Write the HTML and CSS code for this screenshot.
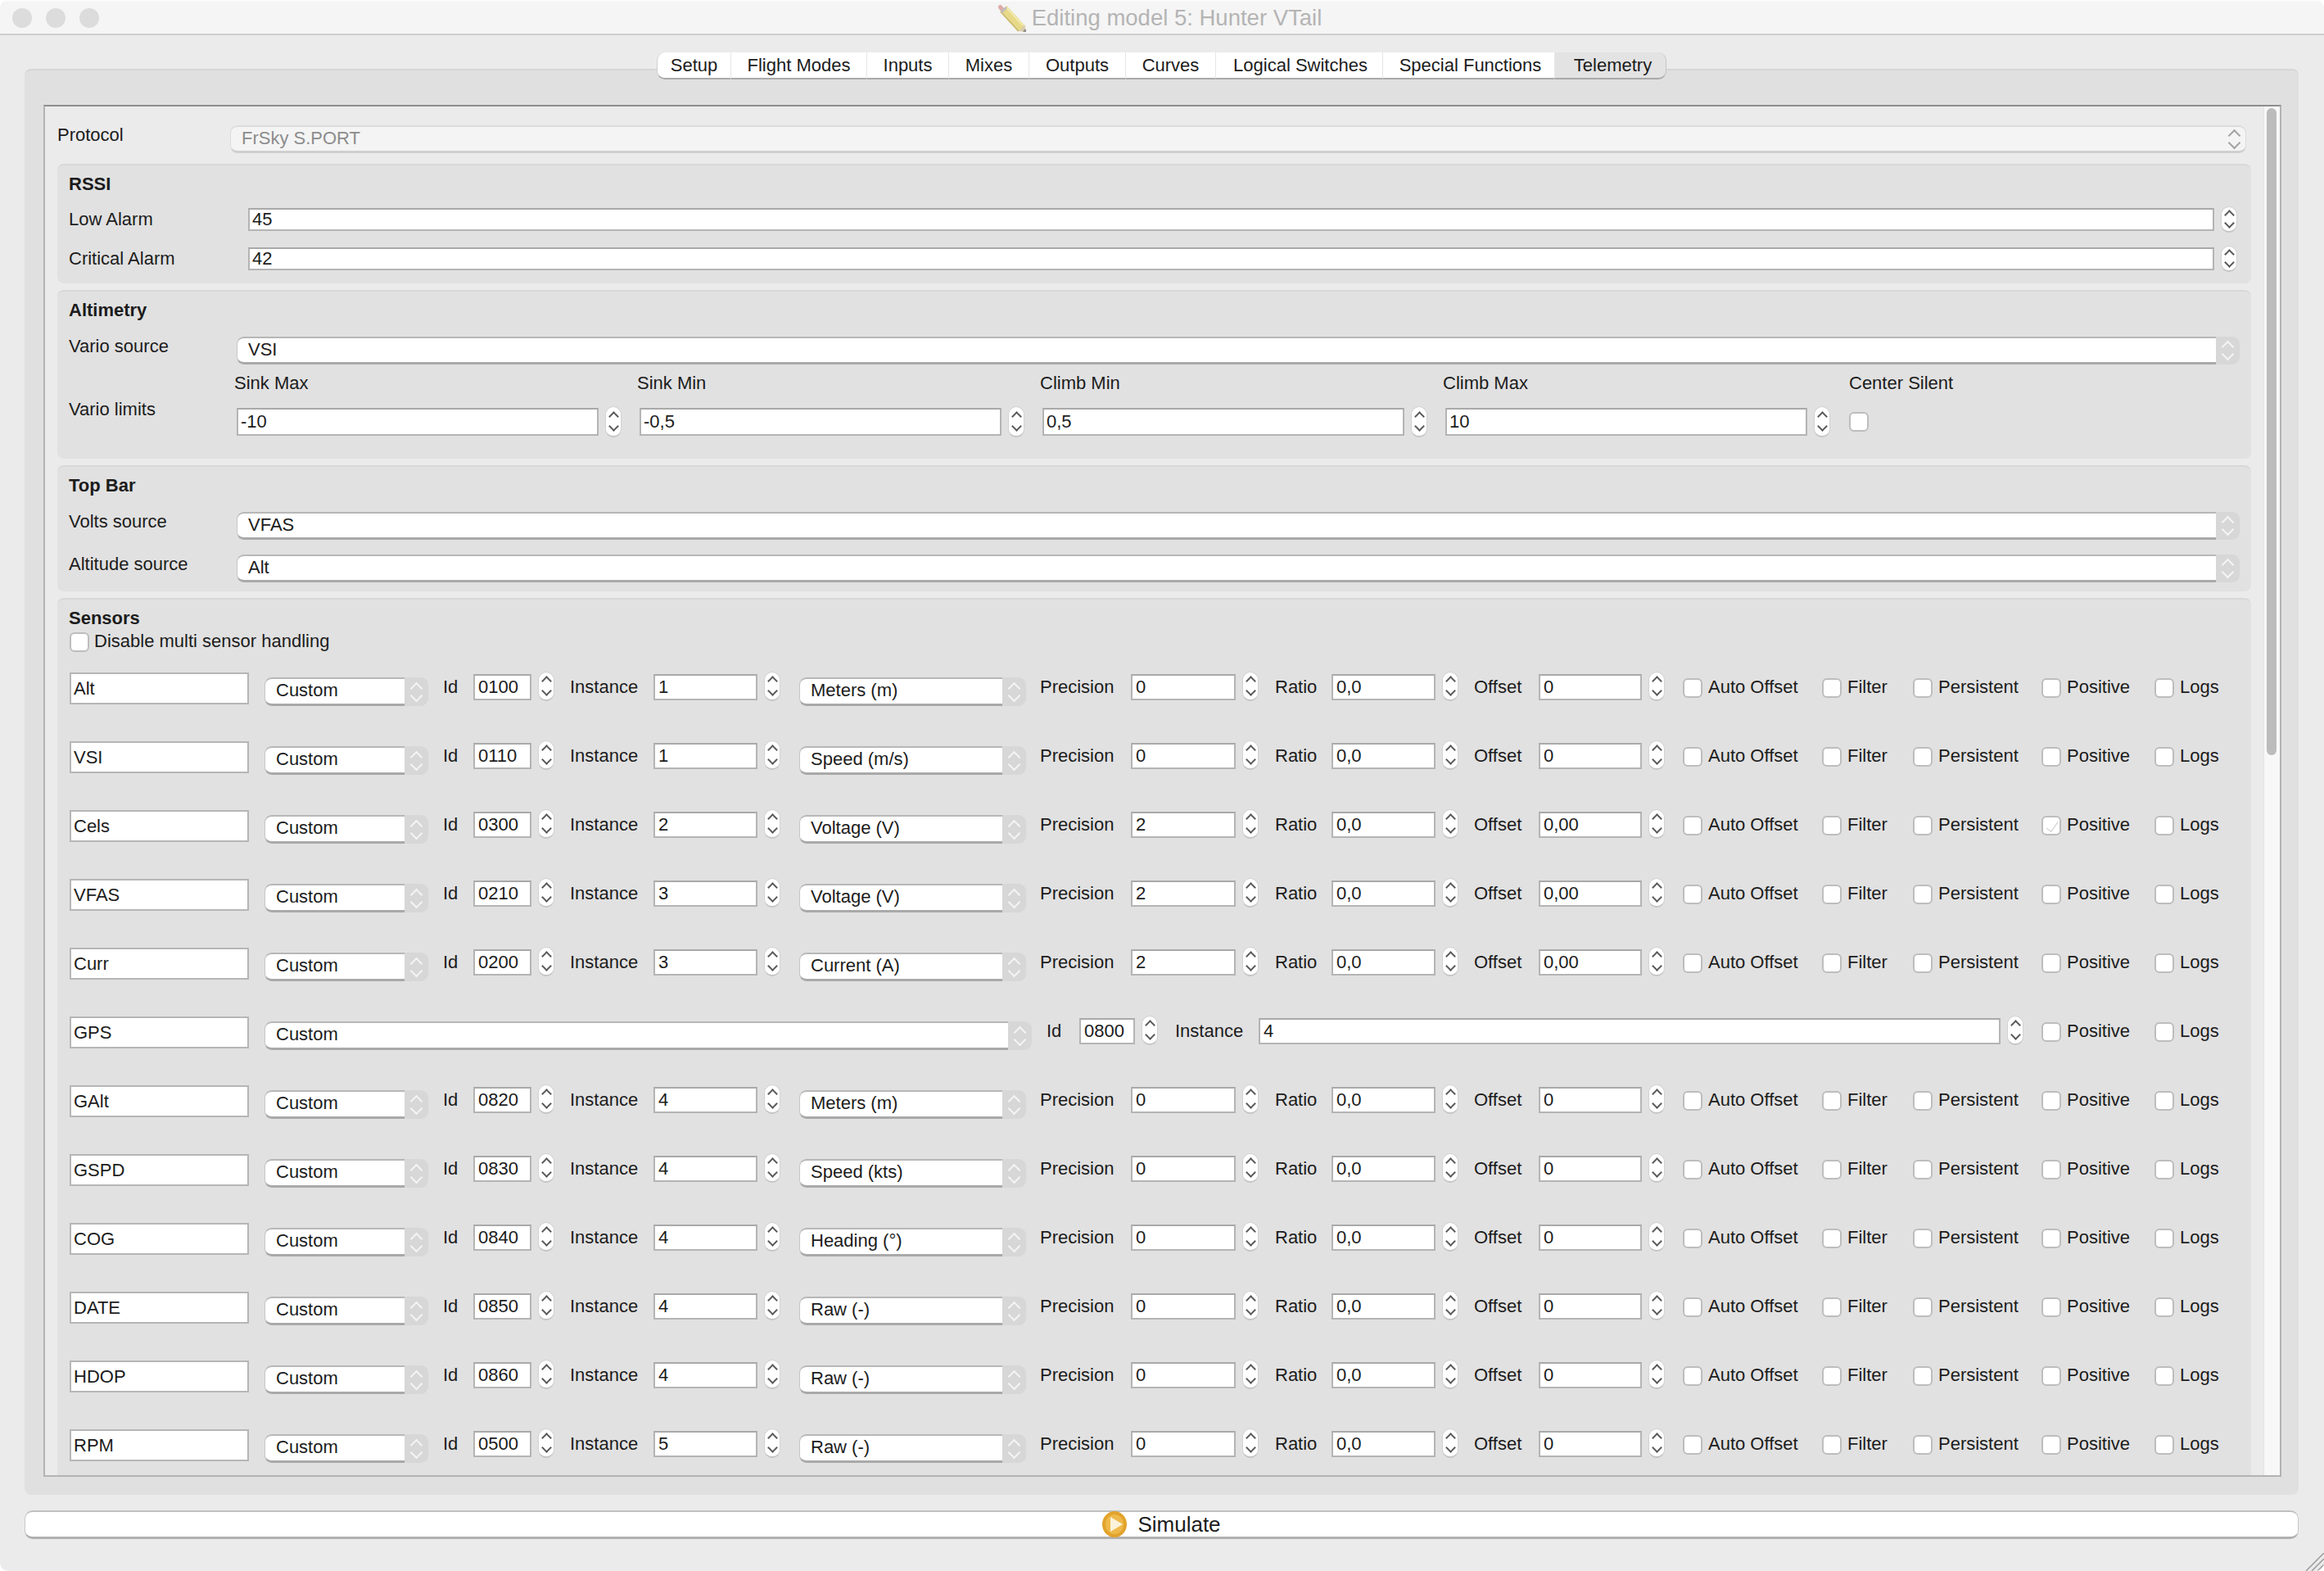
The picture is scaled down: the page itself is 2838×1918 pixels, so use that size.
FILE: index.html
```html
<!DOCTYPE html>
<html lang="en">
<head>
  <meta charset="UTF-8">
  <title>Editing model 5: Hunter VTail</title>
  <link rel="stylesheet" href="styles.css">
</head>
<body>
  <div class="window">
    <header class="titlebar">
      <div class="lights"><span></span><span></span><span></span></div>
      <div class="title">
        <svg class="pencil" width="34" height="34" viewBox="0 0 34 34">
          <path d="M7 5 L30 30" stroke="#e6d67c" stroke-width="9"/>
          <path d="M10 4 L32 28" stroke="#f1e7a6" stroke-width="2.5"/>
          <path d="M3 9 L25 33" stroke="#c9b55a" stroke-width="2"/>
          <path d="M8 6 L4 1.500 Q2 0 0.500 2 Q-1 4 1 6 L4 10 Z" fill="#dba6a0"/>
          <path d="M3 9 L9 3 L11 5 L5 11 Z" fill="#b9b9b9"/>
          <path d="M25 33 L34 34 L32 25 Z" fill="#d8c9a4"/>
          <path d="M30 33.500 L34 34 L33.500 30 Z" fill="#777"/>
        </svg>
        <span>Editing model 5: Hunter VTail</span>
      </div>
    </header>

    <main class="main">
      <nav class="tabs">
        <a class="tab">Setup</a>
        <a class="tab">Flight Modes</a>
        <a class="tab">Inputs</a>
        <a class="tab">Mixes</a>
        <a class="tab">Outputs</a>
        <a class="tab">Curves</a>
        <a class="tab">Logical Switches</a>
        <a class="tab">Special Functions</a>
        <a class="tab active">Telemetry</a>
      </nav>

      <div class="pane">
        <div class="frame">
          <div class="content">
            <div class="row protocol-row">
              <label class="row-label protocol-label">Protocol</label>
              <div class="combo disabled protocol-combo">
                <div class="combo-value">FrSky S.PORT</div>
                <div class="combo-arrow"></div>
              </div>
            </div>

            <section class="group">
              <h4>RSSI</h4>
              <div class="row alarm-row">
                <label class="row-label alarm-label">Low Alarm</label>
                <div class="spinbox alarm-spin"><div class="field">45</div><div class="spin"></div></div>
              </div>
              <div class="row alarm-row second">
                <label class="row-label alarm-label">Critical Alarm</label>
                <div class="spinbox alarm-spin"><div class="field">42</div><div class="spin"></div></div>
              </div>
            </section>

            <section class="group">
              <h4>Altimetry</h4>
              <div class="row source-row">
                <label class="row-label source-label">Vario source</label>
                <div class="combo source-combo">
                  <div class="combo-value">VSI</div>
                  <div class="combo-arrow"></div>
                </div>
              </div>
              <div class="row limits-row">
                <label class="row-label limits-label">Vario limits</label>
                <div class="limit">
                  <div class="limit-head">Sink Max</div>
                  <div class="spinbox limit-spin"><div class="field">-10</div><div class="spin"></div></div>
                </div>
                <div class="limit">
                  <div class="limit-head">Sink Min</div>
                  <div class="spinbox limit-spin"><div class="field">-0,5</div><div class="spin"></div></div>
                </div>
                <div class="limit">
                  <div class="limit-head">Climb Min</div>
                  <div class="spinbox limit-spin"><div class="field">0,5</div><div class="spin"></div></div>
                </div>
                <div class="limit">
                  <div class="limit-head">Climb Max</div>
                  <div class="spinbox limit-spin"><div class="field">10</div><div class="spin"></div></div>
                </div>
                <div class="limit">
                  <div class="limit-head">Center Silent</div>
                  <div class="box silent-box"></div>
                </div>
              </div>
            </section>

            <section class="group">
              <h4>Top Bar</h4>
              <div class="row source-row">
                <label class="row-label source-label">Volts source</label>
                <div class="combo source-combo">
                  <div class="combo-value">VFAS</div>
                  <div class="combo-arrow"></div>
                </div>
              </div>
              <div class="row source-row second">
                <label class="row-label source-label">Altitude source</label>
                <div class="combo source-combo">
                  <div class="combo-value">Alt</div>
                  <div class="combo-arrow"></div>
                </div>
              </div>
            </section>

            <section class="group sensors">
              <h4>Sensors</h4>
              <div class="check multi-check"><span class="box"></span><span>Disable multi sensor handling</span></div>
              <div id="sensorRows"></div>
            </section>
          </div>
          <div class="scrollbar"><div class="thumb"></div></div>
        </div>
      </div>

      <button class="simulate">
        <svg width="30" height="32" viewBox="0 0 30 32">
          <ellipse cx="15" cy="16" rx="15" ry="16" fill="#e2a32c"/>
          <ellipse cx="15" cy="16" rx="11" ry="12" fill="#eeb94a"/>
          <path d="M10 7 L25 16 L10 25 Z" fill="#fbf3dc"/>
        </svg>
        <span>Simulate</span>
      </button>
    </main>

    <svg class="grip" width="22" height="22" viewBox="0 0 22 22">
      <path d="M0 22 L22 0 M7 22 L22 7 M14 22 L22 14" stroke="#9a9a9a" stroke-width="1.500"/>
    </svg>
  </div>

  <script src="script.js"></script>
</body>
</html>
```

FILE: styles.css
```css
* {
  box-sizing: border-box;
}

body {
  margin: 0;
  background-color: #ffffff;
  color: #1c1c1c;
  font-family: "Liberation Sans", Arial, sans-serif;
  font-size: 22px;
}

.window {
  position: relative;
  height: 1918px;
  overflow: hidden;
  background-color: #ebebeb;
  border-radius: 10px;
}

/* title bar */
.titlebar {
  display: grid;
  grid-template-columns: 1fr auto 1fr;
  align-items: center;
  height: 43px;
  padding-left: 15px;
  background-color: #f5f5f5;
  border-top: 2px solid #fbfbfb;
  border-bottom: 2px solid #cfcfcf;
}

.lights {
  display: flex;
  gap: 17px;
}

.lights span {
  width: 24px;
  height: 24px;
  border-radius: 50%;
  background-color: #dcdcdc;
}

.title {
  display: flex;
  align-items: center;
  gap: 7px;
  margin-right: 20px;
  color: #b4b4b4;
  font-size: 27.5px;
}

.pencil {
  opacity: 0.9;
}

/* main area */
.main {
  padding: 21px 31px 0 30px;
}

.tabs {
  position: relative;
  display: flex;
  justify-content: center;
  height: 33px;
  margin-bottom: -13px;
}

.tab {
  line-height: 31px;
  text-align: center;
  background-color: #ffffff;
  border-bottom: 2px solid #a9a9a9;
  border-right: 1px solid #e6e6e6;
}

.tab:nth-child(1) { width: 91px; }
.tab:nth-child(2) { width: 166px; }
.tab:nth-child(3) { width: 100px; }
.tab:nth-child(4) { width: 98px; }
.tab:nth-child(5) { width: 118px; }
.tab:nth-child(6) { width: 110px; }
.tab:nth-child(7) { width: 204px; padding-left: 3px; }
.tab:nth-child(8) { width: 210px; padding-left: 4px; }
.tab:nth-child(9) { width: 136px; padding-left: 6px; }

.tab:first-child {
  border-radius: 10px 0 0 10px;
  border-left: 1px solid #d0d0d0;
}

.tab.active {
  background-color: #e3e3e3;
  border-right: 1px solid #c4c4c4;
  border-radius: 0 10px 10px 0;
}

.pane {
  height: 1741px;
  padding: 42px 21px 22px 23px;
  background-color: #e0e0e0;
  border-top: 2px solid #d6d6d6;
  border-radius: 8px;
}

.frame {
  display: flex;
  height: 100%;
  overflow: hidden;
  background-color: #ebebeb;
  border: 2px solid #b3b3b3;
  border-top-color: #8e8e8e;
}

.content {
  flex: 1;
  min-width: 0;
  padding: 23px 15px 0;
}

.scrollbar {
  flex: none;
  width: 20px;
  padding: 2px 4px;
  background-color: #f8f8f8;
  border-left: 1px solid #e4e4e4;
}

.thumb {
  width: 12px;
  height: 790px;
  margin-left: -1px;
  background-color: #bcbcbc;
  border-radius: 6px;
}

/* widgets */
.field {
  display: flex;
  align-items: center;
  flex: 1;
  height: calc(100% - 4px);
  padding-left: 4px;
  background-color: #ffffff;
  border: 2px solid #b4b4b4;
  border-top-color: #a9a9a9;
}

.spinbox {
  display: flex;
  align-items: center;
  gap: 8px;
  height: 36px;
}

.spin {
  display: flex;
  flex-direction: column;
  align-items: center;
  justify-content: space-evenly;
  flex: none;
  width: 20px;
  height: 100%;
  background-color: #ffffff;
  border: 1px solid #d2d2d2;
  border-bottom: 2px solid #c4c4c4;
  border-radius: 10px;
}

.spin::before,
.spin::after {
  content: "";
  width: 7px;
  height: 7px;
  border-left: 2px solid #5a5a5a;
  border-top: 2px solid #5a5a5a;
  transform: rotate(45deg);
}

.spin::before {
  margin-top: 4px;
}

.spin::after {
  margin-bottom: 4px;
  transform: rotate(225deg);
}

.combo {
  display: flex;
  height: 35px;
}

.combo-value {
  display: flex;
  align-items: center;
  flex: 1;
  padding-left: 13px;
  padding-bottom: 2px;
  background-color: #ffffff;
  border-top: 2px solid #b7b7b7;
  border-bottom: 3px solid #a9a9a9;
  border-left: 1px solid #c6c6c6;
  border-radius: 9px 0 0 9px;
}

.combo-arrow {
  display: flex;
  flex-direction: column;
  align-items: center;
  justify-content: center;
  gap: 4px;
  flex: none;
  width: 29px;
  background-color: #d7d7d7;
  border-radius: 0 9px 9px 0;
}

.combo-arrow::before,
.combo-arrow::after {
  content: "";
  width: 9px;
  height: 9px;
  border-left: 2px solid #f4f4f4;
  border-top: 2px solid #f4f4f4;
  transform: rotate(45deg);
}

.combo-arrow::before {
  margin-bottom: -3px;
}

.combo-arrow::after {
  margin-top: -3px;
  transform: rotate(225deg);
}

.combo.disabled .combo-value {
  color: #8c8c8c;
  background-color: #f4f4f4;
  border-top-color: #dcdcdc;
  border-bottom-color: #cfcfcf;
  border-left-color: #dcdcdc;
}

.combo.disabled .combo-arrow {
  background-color: #f4f4f4;
  border-top: 2px solid #dcdcdc;
  border-bottom: 3px solid #cfcfcf;
  border-right: 1px solid #dcdcdc;
}

.combo.disabled .combo-arrow::before,
.combo.disabled .combo-arrow::after {
  border-color: #a3a3a3;
}

.box {
  display: block;
  position: relative;
  flex: none;
  width: 24px;
  height: 24px;
  background-color: #ffffff;
  border: 2px solid #bdbdbd;
  border-radius: 6px;
}

.box.checked::after {
  content: "";
  position: absolute;
  left: 7px;
  top: 2px;
  width: 7px;
  height: 14px;
  border-right: 1px solid #cfcfcf;
  border-bottom: 1px solid #cfcfcf;
  transform: rotate(35deg);
}

.check {
  display: flex;
  gap: 7px;
  line-height: 24px;
}

/* form rows */
.row {
  display: flex;
  align-items: flex-start;
}

.row-label {
  flex: none;
  line-height: 24px;
}

.protocol-label {
  width: 211px;
}

.protocol-row {
  margin-bottom: 13px;
}

.protocol-combo {
  flex: 1;
  height: 34px;
  margin-right: 6px;
}

.group {
  margin-bottom: 8px;
  padding: 8px 14px 11px;
  background-color: #e1e1e1;
  border-top: 2px solid #d8d8d8;
  border-radius: 8px;
}

.group h4 {
  margin: 0 0 17px;
  font-size: 22px;
  font-weight: bold;
  line-height: 30px;
}

.alarm-row {
  align-items: center;
  margin-top: -5px;
  margin-right: 3px;
}

.alarm-row.second {
  margin-top: 16px;
  margin-bottom: 3px;
}

.alarm-label {
  width: 219px;
}

.alarm-spin {
  flex: 1;
  height: 32px;
}

.alarm-spin .field,
.limit-spin .field {
  padding-left: 3px;
}

.source-label {
  width: 205px;
}

.source-combo {
  flex: 1;
  height: 34px;
}

.source-row.second {
  margin-top: 18px;
}

.limits-row {
  margin-top: 8px;
  padding-bottom: 15px;
}

.limits-label {
  width: 202px;
  margin-top: 35px;
}

.limit {
  flex: none;
  width: 492px;
}

.limit:last-child {
  width: auto;
  margin-left: 4px;
}

.limit-head {
  line-height: 30px;
  margin-bottom: 13px;
}

.limit-spin {
  width: 470px;
  height: 38px;
  margin-left: 3px;
}

.silent-box {
  margin-top: 20px;
}

/* sensor table */
.sensors {
  padding-bottom: 60px;
}

.multi-check {
  gap: 6px;
  margin-top: -15px;
  margin-bottom: 24px;
  margin-left: 1px;
}

.multi-check span:last-child {
  line-height: 22px;
}

.sensor-row {
  display: flex;
  align-items: flex-start;
  height: 84px;
  margin-left: 1px;
}

.sensor-row .lbl {
  flex: none;
  margin-top: 3px;
  line-height: 32px;
}

.sensor-row .field {
  margin-top: 2px;
}

.sensor-row .check {
  flex: none;
  margin-top: 7px;
}

.sensor-row .box {
  margin-top: 1px;
}

.name-field {
  display: flex;
  align-items: center;
  flex: none;
  width: 219px;
  height: 39px;
  margin-top: 1px;
  margin-right: 19px;
  padding-left: 3px;
  background-color: #ffffff;
  border: 2px solid #b6b6b6;
}

.type-combo {
  flex: none;
  width: 200px;
  margin-top: 7px;
  margin-right: 18px;
}

.unit-combo {
  flex: none;
  width: 277px;
  margin-top: 7px;
  margin-right: 17px;
}

.lbl-id { width: 37px; }
.lbl-instance { width: 102px; }
.lbl-precision { width: 111px; }
.lbl-ratio { width: 69px; }
.lbl-offset { width: 79px; }

.spin-id { flex: none; width: 99px; margin-right: 19px; }
.spin-instance { flex: none; width: 155px; margin-right: 23px; }
.spin-precision { flex: none; width: 156px; margin-right: 20px; }
.spin-ratio { flex: none; width: 155px; margin-right: 19px; }
.spin-offset { flex: none; width: 154px; margin-right: 22px; }

.chk-auto { width: 170px; }
.chk-filter { width: 111px; }
.chk-persistent { width: 157px; }
.chk-positive { width: 138px; }

/* the GPS row has no unit and stretches its widgets */
.gps .type-combo { width: 937px; }
.gps .lbl-id { width: 40px; }
.gps .spin-id { width: 96px; margin-right: 21px; }
.gps .spin-instance { width: 934px; margin-right: 22px; }

/* bottom */
.simulate {
  display: flex;
  align-items: center;
  justify-content: center;
  gap: 13px;
  width: 100%;
  height: 35px;
  margin-top: 19px;
  padding: 0;
  color: #1c1c1c;
  font-family: inherit;
  font-size: 26px;
  background-color: #ffffff;
  border: 1px solid #c8c8c8;
  border-top: 2px solid #c0c0c0;
  border-bottom: 3px solid #b0b0b0;
  border-radius: 10px;
}

.grip {
  position: absolute;
  right: 0;
  bottom: 0;
}
```

FILE: script.js
```js
// name, id, instance, unit, precision, offset
const sensors = [
  ['Alt', '0100', '1', 'Meters (m)', '0', '0'],
  ['VSI', '0110', '1', 'Speed (m/s)', '0', '0'],
  ['Cels', '0300', '2', 'Voltage (V)', '2', '0,00'],
  ['VFAS', '0210', '3', 'Voltage (V)', '2', '0,00'],
  ['Curr', '0200', '3', 'Current (A)', '2', '0,00'],
  ['GPS', '0800', '4'],
  ['GAlt', '0820', '4', 'Meters (m)', '0', '0'],
  ['GSPD', '0830', '4', 'Speed (kts)', '0', '0'],
  ['COG', '0840', '4', 'Heading (°)', '0', '0'],
  ['DATE', '0850', '4', 'Raw (-)', '0', '0'],
  ['HDOP', '0860', '4', 'Raw (-)', '0', '0'],
  ['RPM', '0500', '5', 'Raw (-)', '0', '0']
];

function spinbox(cls, value) {
  return `<div class="spinbox ${cls}"><div class="field">${value}</div><div class="spin"></div></div>`;
}

function combo(cls, value) {
  return `<div class="combo ${cls}"><div class="combo-value">${value}</div><div class="combo-arrow"></div></div>`;
}

function check(cls, text, checked) {
  return `<div class="check ${cls}"><span class="box${checked ? ' checked' : ''}"></span><span>${text}</span></div>`;
}

const rows = document.getElementById('sensorRows');

sensors.forEach(([name, id, instance, unit, precision, offset]) => {
  const row = document.createElement('div');
  row.className = unit ? 'sensor-row' : 'sensor-row gps';

  let html = `
    <div class="name-field">${name}</div>
    ${combo('type-combo', 'Custom')}
    <span class="lbl lbl-id">Id</span>
    ${spinbox('spin-id', id)}
    <span class="lbl lbl-instance">Instance</span>
    ${spinbox('spin-instance', instance)}
  `;

  if (unit) {
    html += `
      ${combo('unit-combo', unit)}
      <span class="lbl lbl-precision">Precision</span>
      ${spinbox('spin-precision', precision)}
      <span class="lbl lbl-ratio">Ratio</span>
      ${spinbox('spin-ratio', '0,0')}
      <span class="lbl lbl-offset">Offset</span>
      ${spinbox('spin-offset', offset)}
      ${check('chk-auto', 'Auto Offset')}
      ${check('chk-filter', 'Filter')}
      ${check('chk-persistent', 'Persistent')}
    `;
  }

  html += `
    ${check('chk-positive', 'Positive', name === 'Cels')}
    ${check('chk-logs', 'Logs')}
  `;

  row.innerHTML = html;
  rows.appendChild(row);
});
```
